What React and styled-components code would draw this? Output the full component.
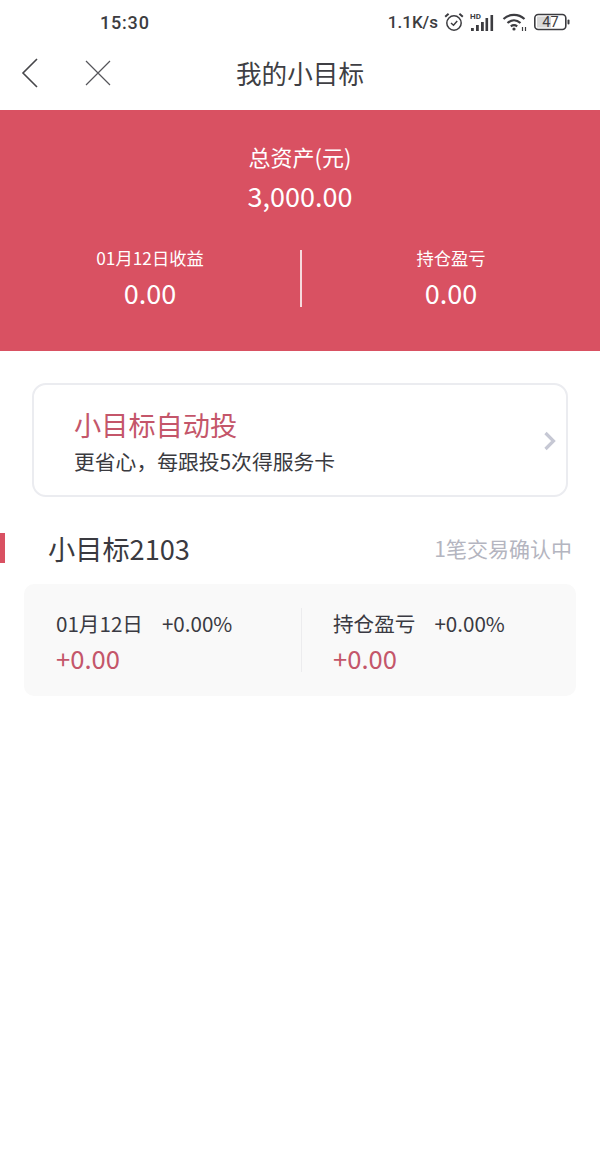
import React from 'react';
import styled, { createGlobalStyle } from 'styled-components';

const GlobalStyle = createGlobalStyle`
  html, body {
    margin: 0;
    padding: 0;
    background: #fff;
    font-family: "Noto Sans CJK SC", "Noto Sans", sans-serif;
  }
  * { box-sizing: border-box; }
`;

const Page = styled.div`
  width: 600px;
  height: 1170px;
  background: #fff;
  overflow: hidden;
`;

const StatusBar = styled.div`
  height: 44px;
  padding: 0 30px 0 100px;
  display: flex;
  align-items: center;
  justify-content: space-between;
  color: #3c3c40;
`;

const Clock = styled.span`
  font-family: Roboto, sans-serif;
  font-size: 18px;
  font-weight: 500;
  letter-spacing: 0.8px;
`;

const StatusIcons = styled.div`
  display: flex;
  align-items: center;
`;

const Speed = styled.span`
  font-family: Roboto, sans-serif;
  font-size: 17px;
  font-weight: 500;
  margin-right: 6px;
`;

const IconGap = styled.span`
  width: ${p => p.$w}px;
`;

const NavBar = styled.div`
  height: 66px;
  position: relative;
  display: flex;
  align-items: center;
  justify-content: center;
  padding-bottom: 8px;
`;

const NavIcons = styled.div`
  position: absolute;
  left: 21px;
  top: 14px;
  display: flex;
  align-items: center;
  gap: 46px;
`;

const NavTitle = styled.div`
  font-size: 25.6px;
  color: #3f3f44;
  line-height: 32px;
`;

const Hero = styled.div`
  height: 241px;
  background: #d95162;
  color: #fff;
  padding-top: 32px;
`;

const HeroLabel = styled.div`
  font-size: 22px;
  line-height: 28px;
  text-align: center;
`;

const HeroAmount = styled.div`
  font-size: 27px;
  line-height: 38px;
  text-align: center;
  margin-top: 7px;
`;

const HeroStats = styled.div`
  display: grid;
  grid-template-columns: 1fr 1fr;
  margin-top: 35px;
`;

const HeroStat = styled.div`
  text-align: center;
  height: 57px;
  border-left: ${p => (p.$divided ? '2px solid #f6dadd' : 'none')};
`;

const StatLabel = styled.div`
  font-size: 17.3px;
  line-height: 20px;
  margin-top: -2px;
`;

const StatValue = styled.div`
  font-size: 27px;
  line-height: 38px;
  margin-top: 6px;
`;

const Promo = styled.div`
  height: 114px;
  margin: 32px 32px 0 32px;
  border: 2px solid #ebecf0;
  border-radius: 14px;
  padding: 20px 9px 0 40px;
  display: flex;
  justify-content: space-between;
`;

const PromoTitle = styled.div`
  font-size: 27.2px;
  line-height: 38px;
  color: #c4566a;
`;

const PromoText = styled.div`
  font-size: 20.8px;
  line-height: 28px;
  color: #3a3a3f;
  margin-top: 4px;
`;

const PromoArrow = styled.div`
  margin-top: 26px;
`;

const GoalHeader = styled.div`
  margin-top: 36px;
  height: 30px;
  display: flex;
  align-items: center;
  justify-content: space-between;
  padding-right: 28px;
`;

const GoalName = styled.div`
  font-size: 27.2px;
  line-height: 30px;
  color: #3a3a40;
  padding-left: 43px;
  border-left: 5px solid #d95162;
`;

const GoalStatus = styled.div`
  font-size: 21px;
  color: #b4b5c0;
  line-height: 30px;
`;

const GoalCard = styled.div`
  margin: 21px 24px 0;
  height: 112px;
  background: #f9f9f9;
  border-radius: 10px;
  padding: 24px 0;
  display: grid;
  grid-template-columns: 277px 1fr;
`;

const GoalCell = styled.div`
  height: 64px;
  padding-left: ${p => (p.$divided ? '31px' : '32px')};
  border-left: ${p => (p.$divided ? '1px solid #ececee' : 'none')};
`;

const CellTop = styled.div`
  display: flex;
  gap: 19px;
  font-size: 20.6px;
  line-height: 30px;
  color: #3a3a42;
`;

const CellValue = styled.div`
  font-size: 25.6px;
  line-height: 36px;
  color: #c4566a;
  margin-top: 2px;
`;

const BackIcon = () => (
  <svg width="18" height="30" viewBox="0 0 18 30" fill="none" stroke="#46464a" strokeWidth="1.6">
    <path d="M16 1 L2 15 L16 29" />
  </svg>
);

const CloseIcon = () => (
  <svg width="26" height="26" viewBox="0 0 26 26" fill="none" stroke="#55555a" strokeWidth="1.2">
    <path d="M1 1 L25 25 M25 1 L1 25" />
  </svg>
);

const AlarmIcon = () => (
  <svg width="20" height="20" viewBox="0 0 20 20" fill="none" stroke="#3c3c40" strokeWidth="1.5">
    <circle cx="10" cy="11" r="7.2" />
    <path d="M7 11 L9.5 13.2 L13.2 9" />
    <path d="M1.2 4.8 L4.6 1.8 M18.8 4.8 L15.4 1.8" strokeWidth="2" />
  </svg>
);

const SignalIcon = () => (
  <svg width="24" height="20" viewBox="0 0 24 20" fill="#3c3c40">
    <text x="0" y="6.5" fontSize="8" fontWeight="700" fontFamily="Roboto, sans-serif">HD</text>
    <rect x="1" y="16" width="2.8" height="3" />
    <rect x="6" y="13" width="2.8" height="6" />
    <rect x="11" y="10" width="2.8" height="9" />
    <rect x="15.5" y="6" width="2.6" height="13" />
    <rect x="20.5" y="3" width="2.6" height="16" />
  </svg>
);

const WifiIcon = () => (
  <svg width="26" height="20" viewBox="0 0 26 20" fill="none" stroke="#3c3c40" strokeWidth="2.2">
    <path d="M1.5 7 C7.5 1.5 16.5 1.5 22.5 7" />
    <path d="M5.5 11 C9.5 7.5 14.5 7.5 18.5 11" />
    <path d="M8.8 14.3 C10.8 12.8 13.2 12.8 15.2 14.3" />
    <circle cx="12" cy="17" r="1.6" fill="#3c3c40" stroke="none" />
    <path d="M20.5 15 V19 M23.5 15 V19" strokeWidth="1.2" />
  </svg>
);

const BatteryIcon = () => (
  <svg width="36" height="18" viewBox="0 0 36 18">
    <rect x="0.8" y="1.5" width="31" height="15" rx="3.5" fill="#fff" stroke="#3c3c40" strokeWidth="1.6" />
    <rect x="3" y="3.5" width="14" height="11" fill="#d8d8d8" />
    <text x="16.5" y="14.2" textAnchor="middle" fontSize="14.5" fontFamily="Roboto, sans-serif" fontWeight="400" fill="#3c3c40">47</text>
    <rect x="33.5" y="6.5" width="2" height="5" rx="1" fill="#3c3c40" />
  </svg>
);

const ChevronIcon = () => (
  <svg width="14" height="20" viewBox="0 0 14 20" fill="none" stroke="#c6c8d4" strokeWidth="3.2">
    <path d="M2.5 2 L10.5 10 L2.5 18" />
  </svg>
);

export default function App() {
  return (
    <Page>
      <GlobalStyle />
      <StatusBar>
        <Clock>15:30</Clock>
        <StatusIcons>
          <Speed>1.1K/s</Speed>
          <AlarmIcon />
          <IconGap $w={6} />
          <SignalIcon />
          <IconGap $w={8} />
          <WifiIcon />
          <IconGap $w={6} />
          <BatteryIcon />
        </StatusIcons>
      </StatusBar>
      <NavBar>
        <NavIcons>
          <BackIcon />
          <CloseIcon />
        </NavIcons>
        <NavTitle>我的小目标</NavTitle>
      </NavBar>
      <Hero>
        <HeroLabel>总资产(元)</HeroLabel>
        <HeroAmount>3,000.00</HeroAmount>
        <HeroStats>
          <HeroStat>
            <StatLabel>01月12日收益</StatLabel>
            <StatValue>0.00</StatValue>
          </HeroStat>
          <HeroStat $divided>
            <StatLabel>持仓盈亏</StatLabel>
            <StatValue>0.00</StatValue>
          </HeroStat>
        </HeroStats>
      </Hero>
      <Promo>
        <div>
          <PromoTitle>小目标自动投</PromoTitle>
          <PromoText>更省心，每跟投5次得服务卡</PromoText>
        </div>
        <PromoArrow>
          <ChevronIcon />
        </PromoArrow>
      </Promo>
      <GoalHeader>
        <GoalName>小目标2103</GoalName>
        <GoalStatus>1笔交易确认中</GoalStatus>
      </GoalHeader>
      <GoalCard>
        <GoalCell>
          <CellTop>
            <span>01月12日</span>
            <span>+0.00%</span>
          </CellTop>
          <CellValue>+0.00</CellValue>
        </GoalCell>
        <GoalCell $divided>
          <CellTop>
            <span>持仓盈亏</span>
            <span>+0.00%</span>
          </CellTop>
          <CellValue>+0.00</CellValue>
        </GoalCell>
      </GoalCard>
    </Page>
  );
}
